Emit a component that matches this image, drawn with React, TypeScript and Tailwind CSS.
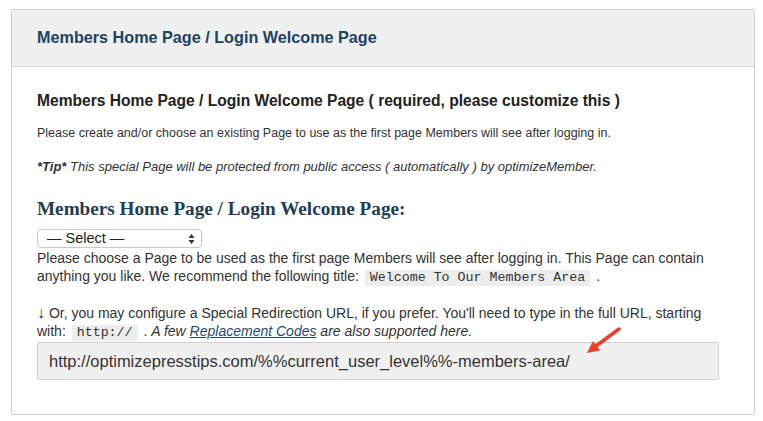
import React from "react";

const sans = "font-['Helvetica_Neue','Liberation_Sans',Arial,sans-serif]";
const mono = "font-['Liberation_Mono','DejaVu_Sans_Mono',monospace]";

const Code = ({ children }: { children: React.ReactNode }) => (
  <code className={`${mono} inline-block bg-[#ededed] text-[#333] text-[13.3px] leading-[16px] px-[5px] mx-[2px]`}>
    {children}
  </code>
);

export default function App() {
  return (
    <div className={`${sans} bg-white w-[763px] h-[421px] pt-[9px] pl-[11px]`}>
      <div className="w-[744px] h-[406px] border border-[#cfcfcf] rounded-[2px] flex flex-col">
        {/* Header */}
        <div className="h-[57px] bg-[#f0f0f0] border-b border-[#d4d4d4] flex items-center px-[25px]">
          <h2 className="text-[16.2px] font-bold text-[#1d4364] leading-none pb-[2px]">
            Members Home Page / Login Welcome Page
          </h2>
        </div>

        {/* Body */}
        <div className="relative flex-1 pl-[25px] pr-[35px] pt-[24px] text-[#333]">
          <h3 className="text-[15.6px] leading-[19px] font-bold text-[#222]">
            Members Home Page / Login Welcome Page ( required, please customize this )
          </h3>
          <p className="mt-[15px] text-[12.5px] leading-[16px]">
            Please create and/or choose an existing Page to use as the first page Members will see after logging in.
          </p>
          <p className="mt-[18px] text-[13px] leading-[16px] italic">
            <b>*Tip*</b> This special Page will be protected from public access ( automatically ) by optimizeMember.
          </p>

          <h4 className="mt-[22px] text-[19.2px] leading-[24px] font-bold text-[#1f3d55] font-['Liberation_Serif','DejaVu_Serif',serif]">
            Members Home Page / Login Welcome Page:
          </h4>

          <div className="mt-[8px] w-[165px] h-[19px] border border-[#c9c9c9] rounded-[4px] bg-white flex items-center justify-between pl-[9px] pr-[6px] text-[14.5px] text-[#222]">
            <span className="leading-none">— Select —</span>
            <svg width="7" height="12" viewBox="0 0 7 12">
              <path d="M3.5 1 L6.5 5 L0.5 5 Z" fill="#333" />
              <path d="M3.5 11 L6.5 7 L0.5 7 Z" fill="#333" />
            </svg>
          </div>

          <p className="mt-[1px] text-[14px] leading-[18px]">
            Please choose a Page to be used as the first page Members will see after logging in. This Page can contain
            <br />
            anything you like. We recommend the following title: <Code>Welcome To Our Members Area</Code> .
          </p>

          <p className="mt-[18px] text-[14px] leading-[18px]">
            <span className="text-[16px] leading-[16px]">↓</span> Or, you may configure a Special Redirection URL, if you prefer. You'll need to type in the full URL, starting
            <br />
            with: <Code>http://</Code> . <i>A few </i><a className="italic underline text-[#1f4a68]">Replacement Codes</a><i> are also supported here.</i>
          </p>

          <div className="mt-[1px] h-[38px] bg-[#f0f0f0] border border-[#d0d0d0] rounded-[2px] flex items-center px-[11px] text-[16.5px] text-[#333]">
            http://optimizepresstips.com/%%current_user_level%%-members-area/
          </div>

          {/* annotation arrow */}
          <svg className="absolute left-[570px] top-[260px]" width="42" height="30" viewBox="0 0 42 30">
            <path d="M37 2 L14 19" stroke="#e8402a" strokeWidth="3.5" strokeLinecap="round" />
            <path d="M5 26 L18.2 23.6 L11 14 Z" fill="#e8402a" />
          </svg>
        </div>
      </div>
    </div>
  );
}
